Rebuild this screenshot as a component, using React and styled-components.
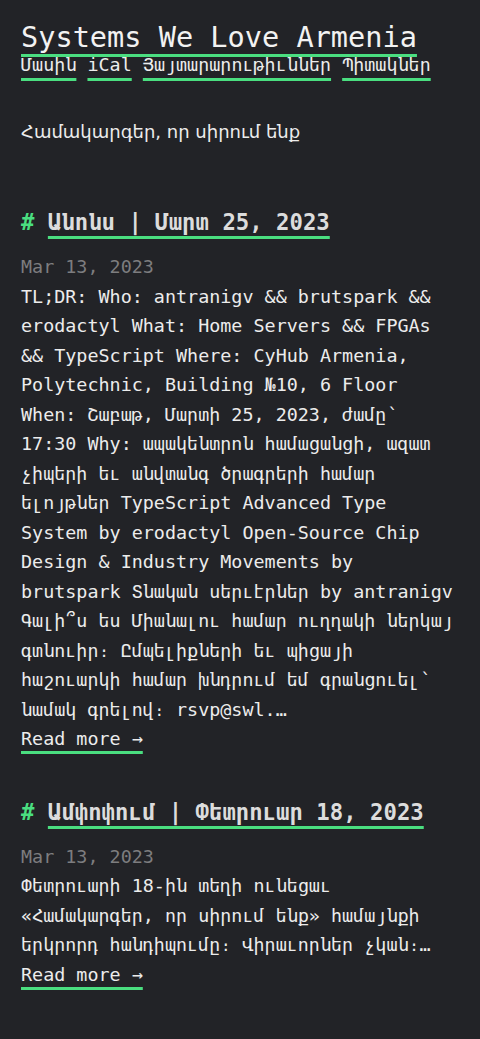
import React from "react";
import styled, { createGlobalStyle } from "styled-components";

const GlobalStyle = createGlobalStyle`
  html, body {
    margin: 0;
    padding: 0;
    background: #222327;
  }
  body {
    font-family: "DejaVu Sans Mono", "Liberation Mono", monospace;
    color: #e8e8e8;
  }
`;

const green = "#4ade80";

const Page = styled.div`
  padding: 21px 21px 40px 21px;
  min-height: 100vh;
  box-sizing: border-box;
`;

const Header = styled.header`
  display: flex;
  flex-direction: column;
`;

const SiteTitle = styled.a`
  align-self: flex-start;
  font-size: 28.6px;
  line-height: 32px;
  color: #f2f2f2;
  text-decoration: underline;
  text-decoration-color: ${green};
  text-decoration-thickness: 3px;
  text-underline-offset: 7px;
`;

const Nav = styled.nav`
  font-size: 18.4px;
  line-height: 24px;
`;

const NavLink = styled.a`
  color: #ececec;
  text-decoration: underline;
  text-decoration-color: ${green};
  text-decoration-thickness: 3px;
  text-underline-offset: 7px;
`;

const Tagline = styled.p`
  margin: 40px 0 0 0;
  font-family: "DejaVu Sans", sans-serif;
  font-size: 18px;
  line-height: 29px;
  color: #ececec;
`;

const Post = styled.article`
  margin-top: ${(p) => p.$gap}px;
`;

const PostTitle = styled.h2`
  margin: 0;
  font-size: 22.3px;
  line-height: 30px;
  font-weight: bold;
`;

const Hash = styled.span`
  color: ${green};
`;

const TitleLink = styled.a`
  color: #dcdcdc;
  text-decoration: underline;
  text-decoration-color: ${green};
  text-decoration-thickness: 3px;
  text-underline-offset: 6px;
`;

const PostDate = styled.div`
  margin-top: 15px;
  font-size: 18.4px;
  line-height: 29.5px;
  color: #7d7d7f;
`;

const Summary = styled.p`
  margin: 0;
  font-size: 18.4px;
  line-height: 29.5px;
  color: #ececec;
`;

const ReadMore = styled.a`
  font-size: 18.4px;
  line-height: 29.5px;
  color: #ececec;
  text-decoration: underline;
  text-decoration-color: ${green};
  text-decoration-thickness: 3px;
  text-underline-offset: 6px;
`;

const posts = [
  {
    title: "Անոնս | Մարտ 25, 2023",
    date: "Mar 13, 2023",
    gap: 61,
    summary:
      "TL;DR: Who: antranigv && brutspark && erodactyl What: Home Servers && FPGAs && TypeScript Where: CyHub Armenia, Polytechnic, Building №10, 6 Floor When: Շաբաթ, Մարտի 25, 2023, ժամը՝ 17:30 Why: ապակենտրոն համացանցի, ազատ չիպերի եւ անվտանգ ծրագրերի համար ելոյթներ TypeScript Advanced Type System by erodactyl Open-Source Chip Design & Industry Movements by brutspark Տնական սերւէրներ by antranigv Գալի՞ս ես Միանալու համար ուղղակի ներկայ գտնուիր։ Ըմպելիքների եւ պիցայի հաշուարկի համար խնդրում եմ գրանցուել՝ նամակ գրելով։ rsvp@swl.…",
  },
  {
    title: "Ամփոփում | Փետրուար 18, 2023",
    date: "Mar 13, 2023",
    gap: 43,
    summary:
      "Փետրուարի 18-ին տեղի ունեցաւ «Համակարգեր, որ սիրում ենք» համայնքի երկրորդ հանդիպումը։ Վիրաւորներ չկան։…",
  },
];

export default function App() {
  return (
    <>
      <GlobalStyle />
      <Page>
        <Header>
          <SiteTitle href="#">Systems We Love Armenia</SiteTitle>
          <Nav>
            <NavLink href="#">Մասին</NavLink> <NavLink href="#">iCal</NavLink>{" "}
            <NavLink href="#">Յայտարարութիւններ</NavLink>{" "}
            <NavLink href="#">Պիտակներ</NavLink>
          </Nav>
        </Header>
        <Tagline>Համակարգեր, որ սիրում ենք</Tagline>
        {posts.map((post) => (
          <Post key={post.title} $gap={post.gap}>
            <PostTitle>
              <Hash>#</Hash> <TitleLink href="#">{post.title}</TitleLink>
            </PostTitle>
            <PostDate>{post.date}</PostDate>
            <Summary>{post.summary}</Summary>
            <ReadMore href="#">Read more →</ReadMore>
          </Post>
        ))}
      </Page>
    </>
  );
}
